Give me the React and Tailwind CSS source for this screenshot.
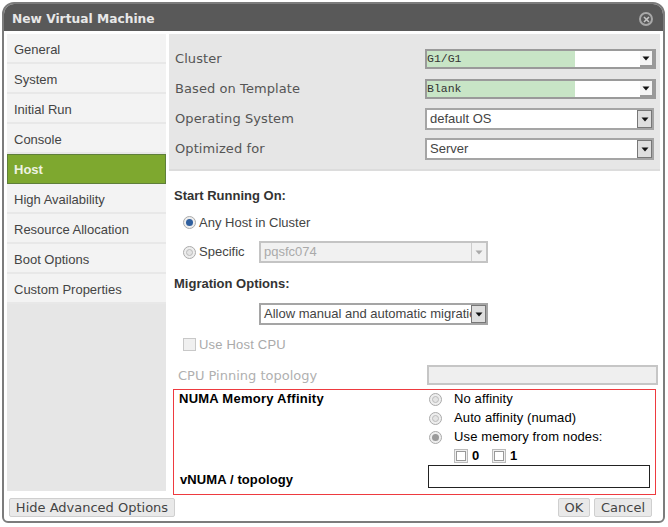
import React from 'react';

const sideItems = ['General', 'System', 'Initial Run', 'Console', 'Host', 'High Availability', 'Resource Allocation', 'Boot Options', 'Custom Properties'];
const verdana = "font-['DejaVu_Sans',sans-serif]";

function Arrow({ color = '#111' }) {
  return (
    <svg width="8" height="5" viewBox="0 0 8 5"><path d="M0.5 0.5h7L4 4.5z" fill={color} /></svg>
  );
}

function TemplateSelect({ value }) {
  return (
    <div className="w-[231px] h-[20px] border-2 border-[#9a9a9a] bg-white flex">
      <div className="w-[148px] bg-[#c8e5c6] font-['Liberation_Mono',monospace] text-[11.5px] leading-[16px] text-[#333]">{value}</div>
      <div className="flex-1" />
      <div className="w-[14px] flex items-center justify-center bg-[#f4f4f4] border-r-2 border-b-2 border-[#999]"><Arrow /></div>
    </div>
  );
}

function PlainSelect({ value, className = 'w-[229px]' }) {
  return (
    <div className={`${className} h-[22px] border-2 border-[#a5a5a5] bg-white flex items-center overflow-hidden`}>
      <div className="flex-1 pl-[3px] text-[13px] text-[#444] whitespace-nowrap overflow-hidden">{value}</div>
      <div className="w-[15px] h-full shrink-0 flex items-center justify-center bg-[#dedede] border border-[#777]"><Arrow /></div>
    </div>
  );
}

function TopRow({ label, children }) {
  return (
    <div className="h-[30px] flex items-center justify-between">
      <span className={`${verdana} text-[13px] tracking-[0.08px] text-[#555]`}>{label}</span>
      {children}
    </div>
  );
}

function Radio({ checked, active }) {
  return (
    <span className="w-[13px] h-[13px] rounded-full border border-[#aaa] bg-[#eee] flex items-center justify-center shrink-0">
      <span className={`w-[7px] h-[7px] rounded-full ${active ? 'bg-[#2f5f9e]' : checked ? 'bg-[#9a9a9a]' : 'bg-[#e4e4e4] border border-[#bbb]'}`} />
    </span>
  );
}

function NodeCheck({ label }) {
  return (
    <span className="flex items-center gap-[4px] font-bold text-[13px] text-black">
      <span className="w-[14px] h-[14px] border border-[#bbb] bg-[#efefef] flex items-center justify-center">
        <span className="w-[10px] h-[10px] border border-[#999] bg-white" />
      </span>
      <span className="w-[18px]">{label}</span>
    </span>
  );
}

export default function App() {
  return (
    <div className="w-[668px] h-[527px] bg-white overflow-hidden font-['Liberation_Sans',sans-serif] pt-[2px] pl-[2px]">
      <div className="w-[663px] h-[521px] border-2 border-[#7c7c7c] rounded-t-[12px] rounded-b-[6px] bg-white flex flex-col overflow-hidden">
        {/* Title bar */}
        <div className="h-[27px] shrink-0 bg-[#595959] flex items-center justify-between pl-[8px] pr-[10px] pt-[3px]">
          <span className={`${verdana} font-bold text-[12.25px] text-[#e8e8e8]`}>New Virtual Machine</span>
          <span className="w-[14px] h-[14px] rounded-full border-2 border-[#a8a8a8] flex items-center justify-center">
            <svg width="7" height="7" viewBox="0 0 7 7"><path d="M1 1l5 5M6 1L1 6" stroke="#c4c4c4" strokeWidth="1.6" /></svg>
          </span>
        </div>

        <div className="flex-1 flex gap-[3px] pl-[3px] pr-[3px] pt-[3px] min-h-0">
          {/* Sidebar */}
          <div className="w-[159px] h-[457px] bg-[#e6e6e6] shrink-0">
            {sideItems.map((item) => (
              item === 'Host' ? (
                <div key={item} className="h-[30px] bg-[#7ea82f] border border-[#5f7f3a] pl-[6px] pt-[2px] flex items-center text-[13px] font-bold text-[#eef3e2]">{item}</div>
              ) : (
                <div key={item} className="h-[30px] bg-[#f3f3f3] border-b-2 border-[#e8e8e8] pl-[7px] pt-[4px] flex items-center text-[13px] text-[#444]">{item}</div>
              )
            ))}
          </div>

          {/* Main panel */}
          <div className="flex-1 min-w-0 flex flex-col">
            <div className="h-[137px] shrink-0 bg-[#e6e6e6] border-b-2 border-[#dcdcdc] pl-[6px] pr-[4px] pt-[10px]">
              <TopRow label="Cluster"><TemplateSelect value="G1/G1" /></TopRow>
              <TopRow label="Based on Template"><TemplateSelect value="Blank" /></TopRow>
              <TopRow label="Operating System"><div className="pr-[2px]"><PlainSelect value="default OS" /></div></TopRow>
              <TopRow label="Optimized for"><div className="pr-[2px]"><PlainSelect value="Server" /></div></TopRow>
            </div>

            <div className="pl-[5px] pt-[17px]">
              <div className="font-bold text-[13px] leading-[15px] text-[#333]">Start Running On:</div>
              <div className="flex items-center gap-[3px] pl-[9px] mt-[12px] text-[13px] leading-[15px] text-[#444]">
                <Radio active />
                <span>Any Host in Cluster</span>
              </div>
              <div className="flex items-center pl-[9px] mt-[11px] text-[13px] text-[#444]">
                <Radio />
                <span className="ml-[3px] w-[60px]">Specific</span>
                <div className="w-[229px] h-[22px] border-2 border-[#c4c4c4] bg-[#f1f1f1] flex items-center">
                  <span className="flex-1 pl-[3px] text-[#aaa]">pqsfc074</span>
                  <span className="w-[15px] h-full flex items-center justify-center border-l border-[#ccc]"><Arrow color="#aaa" /></span>
                </div>
              </div>
              <div className="font-bold text-[13px] leading-[15px] text-[#333] mt-[13px]">Migration Options:</div>
              <div className="pl-[85px] mt-[12px]">
                <PlainSelect value="Allow manual and automatic migration" />
              </div>
              <div className="flex items-center gap-[3px] pl-[9px] mt-[12px] text-[13px] leading-[15px] text-[#aaa]">
                <span className="w-[13px] h-[13px] border border-[#c8c8c8] bg-[#f0f0f0]" />
                <span className="tracking-[0.2px]">Use Host CPU</span>
              </div>
              <div className="flex items-center justify-between mt-[12px] pl-[4px] pr-[2px]">
                <span className={`${verdana} text-[13px] pt-[2px] text-[#b0b0b0]`}>CPU Pinning topology</span>
                <div className="w-[231px] h-[20px] bg-[#efefef] border-2 border-[#c6c6c6]" />
              </div>
            </div>

            {/* NUMA box */}
            <div className="w-[483px] h-[106px] shrink-0 ml-[4px] mt-[3px] border border-[#ee3a3f] flex flex-col">
              <div className="h-[75px] shrink-0 flex">
                <div className="w-[255px] pl-[5px] pt-[1px] font-bold text-[13px] tracking-[0.25px] leading-[16px] text-black">NUMA Memory Affinity</div>
                <div className="flex flex-col text-[13px] text-black">
                  {[['No affinity', false], ['Auto affinity (numad)', false], ['Use memory from nodes:', true]].map(([t, c]) => (
                    <div key={t} className="h-[19px] flex items-center gap-[12px] tracking-[0.12px]">
                      <Radio checked={c} />
                      <span>{t}</span>
                    </div>
                  ))}
                  <div className="flex gap-[2px] h-[18px] items-center pl-[25px]">
                    <NodeCheck label="0" />
                    <NodeCheck label="1" />
                  </div>
                </div>
              </div>
              <div className="flex items-start flex-1">
                <div className="w-[254px] pl-[6px] pt-[7px] font-bold text-[13px] leading-[16px] tracking-[0.1px] text-black">vNUMA / topology</div>
                <div className="w-[222px] h-[23px] border border-[#222] bg-white" />
              </div>
            </div>
          </div>
        </div>

        {/* Footer */}
        <div className="h-[28px] shrink-0 flex items-center justify-between pl-[5px] pr-[11px]">
          <button className={`h-[19px] w-[166px] bg-[#e9e9e9] border border-[#cfcfcf] rounded-[2px] ${verdana} text-[13px] leading-[15px] text-[#444]`}>Hide Advanced Options</button>
          <div className="flex gap-[4px]">
            <button className={`h-[19px] w-[32px] bg-[#e9e9e9] border border-[#cfcfcf] rounded-[2px] ${verdana} text-[13px] leading-[15px] text-[#444]`}>OK</button>
            <button className={`h-[19px] w-[58px] bg-[#e9e9e9] border border-[#cfcfcf] rounded-[2px] ${verdana} text-[13px] leading-[15px] text-[#444]`}>Cancel</button>
          </div>
        </div>
      </div>
    </div>
  );
}
